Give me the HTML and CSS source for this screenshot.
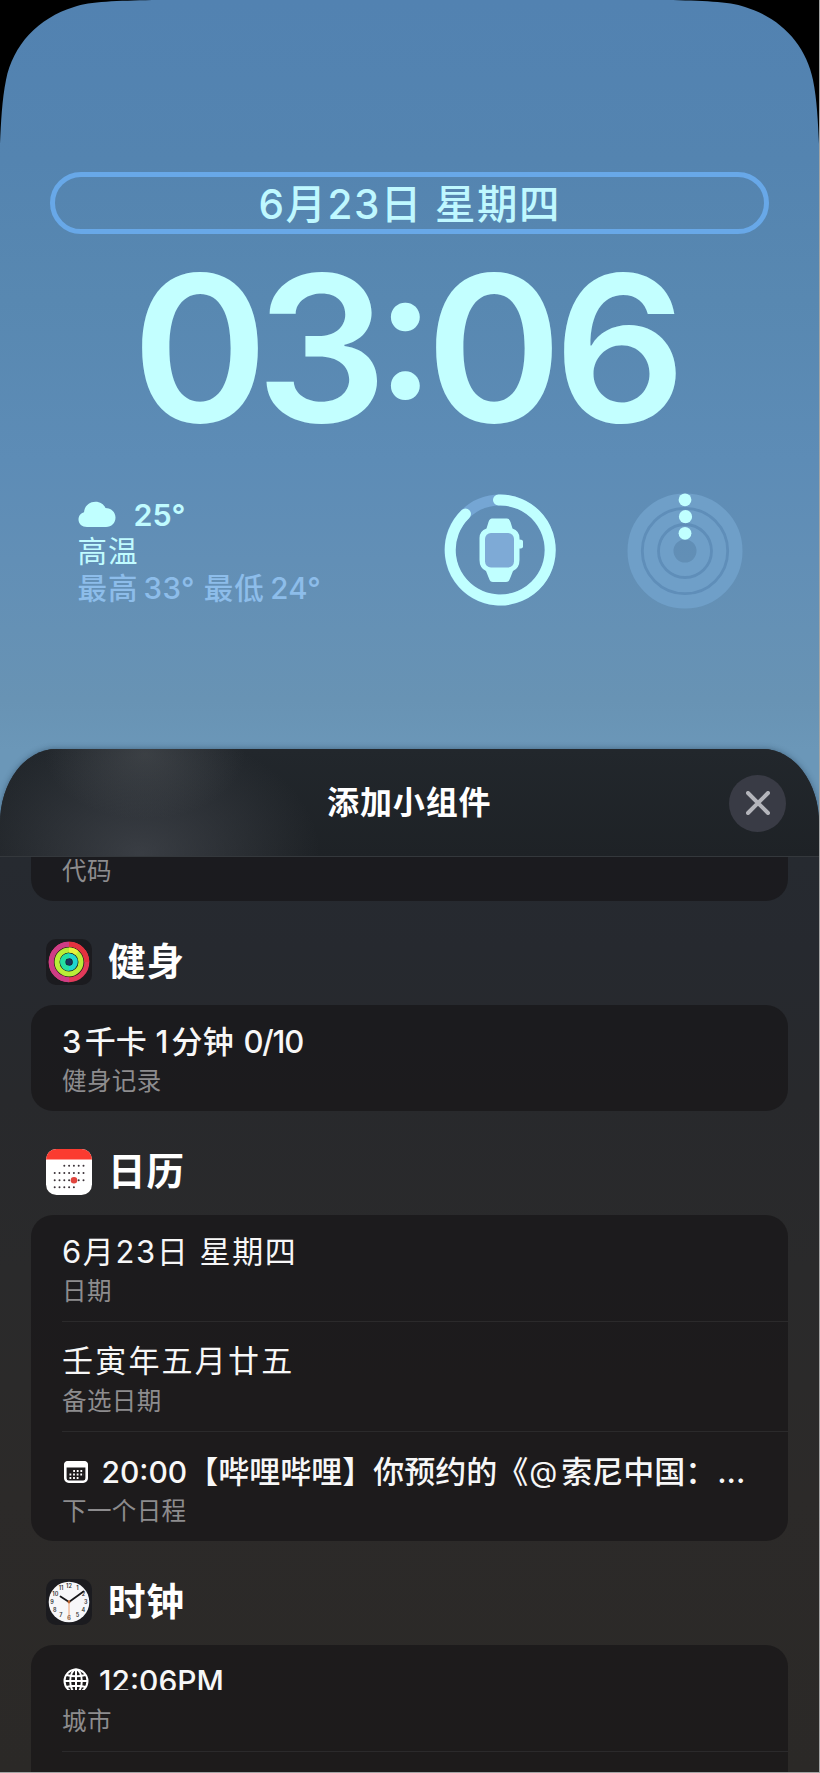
FILE: index.html
```html
<!DOCTYPE html>
<html lang="zh-CN">
<head>
<meta charset="utf-8">
<title>添加小组件</title>
<link rel="stylesheet" href="styles.css">
</head>
<body>
<div class="phone">
  <svg class="corner corner-left" viewBox="0 0 152 144"><path d="M0 0H152C118 1 90 1 74 7C38 18 13 45 6 80C2 100 1 122 0 144Z"/></svg>
  <svg class="corner corner-right" viewBox="0 0 152 144"><path d="M0 0H152C118 1 90 1 74 7C38 18 13 45 6 80C2 100 1 122 0 144Z"/></svg>

  <section class="lock">
    <div class="date-pill"><span class="date-text">6月23日 星期四</span></div>
    <div class="time"><span>0</span><span>3</span><span class="colon">:</span><span class="minute-tens">0</span><span>6</span></div>
    <div class="widgets">
      <div class="weather">
        <div class="weather-now">
          <svg class="cloud" viewBox="0 0 38 26"><path d="M9 26C4 26 .5 23 .5 18.500C.5 14.800 2.800 12 6 11.200C6.500 5 11.500 .8 17.500 .8C22 .8 25.800 3.200 27.500 7C33 7 37.500 11 37.500 16.500C37.500 22 33.500 26 28 26Z"/></svg>
          <span class="temp">25°</span>
        </div>
        <div class="weather-line">高温</div>
        <div class="weather-line dim">最高<span class="num high">33°</span> 最低<span class="num low">24°</span></div>
      </div>
      <svg class="battery" viewBox="0 0 112 112">
        <circle class="track" cx="56" cy="56" r="50"/>
        <path class="arc" d="M54.500 6A50 50 0 1 1 21.500 20"/>
        <path class="lit" d="M48 24.500H63Q65.500 24.500 66.500 28L68.500 34.500Q75.500 37 75.500 44V45.500Q79 45.500 79 47.500V52.500Q79 54.500 75.500 54.500V66Q75.500 74 69 77L66 84.500Q65 88 62 88H49Q46 88 45 84.500L42 77Q35.500 74 35.500 66V44Q35.500 37 42.500 34.500L44.500 28Q45.500 24.500 48 24.500Z"/>
        <rect class="screen" x="41" y="39" width="29" height="34.500" rx="6"/>
      </svg>
      <svg class="rings" viewBox="0 0 116 116">
        <circle class="band" cx="58" cy="58" r="50.500" stroke-width="14"/>
        <circle class="band" cx="58" cy="58" r="34.500" stroke-width="15"/>
        <circle class="band" cx="58" cy="58" r="18.500" stroke-width="14"/>
        <circle class="gap" cx="58" cy="58" r="42.700"/>
        <circle class="gap" cx="58" cy="58" r="26.500"/>
        <circle class="lit" cx="58" cy="6.800" r="6.400"/>
        <circle class="lit" cx="58.500" cy="23.700" r="6.600"/>
        <circle class="lit" cx="58" cy="40.300" r="6.400"/>
      </svg>
    </div>
  </section>

  <section class="sheet">
    <header class="sheet-head">
      <h1>添加小组件</h1>
      <button class="close" aria-label="关闭"><svg viewBox="0 0 24 24"><path d="M2 2L22 22M22 2L2 22"/></svg></button>
    </header>
    <div class="list">
      <div class="card card-cut"><div class="sub">代码</div></div>

      <div class="app-head">
        <svg class="app-icon" viewBox="0 0 46 46">
          <rect width="46" height="46" rx="10" fill="#1b1b1f"/>
          <g fill="none" stroke-width="5">
            <circle cx="23" cy="23" r="17.800" stroke="#e13a59"/>
            <path d="M23 40.800A17.800 17.800 0 0 1 23 5.200" stroke="#cf3d86"/>
            <path d="M23 5.200A17.800 17.800 0 0 1 40.800 23" stroke="#e3323f"/>
            <circle cx="23" cy="23" r="12" stroke="#b9ee38"/>
            <path d="M23 11A12 12 0 0 1 31 14" stroke="#e8f23d"/>
            <circle cx="23" cy="23" r="6.300" stroke="#20d6cf"/>
            <path d="M23 29.300A6.300 6.300 0 0 1 23 16.700" stroke="#25dfa2"/>
          </g>
          <circle cx="23" cy="23" r="3" fill="#17365f"/>
        </svg>
        <h2>健身</h2>
      </div>
      <div class="card">
        <div class="row"><div class="main medium fit-fitness"><span class="kcal">3</span>千卡 <span class="mins">1</span>分钟 <span class="hours">0/10</span></div><div class="sub">健身记录</div></div>
      </div>

      <div class="app-head">
        <svg class="app-icon" viewBox="0 0 46 46">
          <rect width="46" height="46" rx="10.500" fill="#fff"/>
          <path d="M0 10.500A10.500 10.500 0 0 1 10.500 0H35.500A10.500 10.500 0 0 1 46 10.500Z" fill="#fb3b30"/>
          <g stroke="#3b3238" stroke-width="2" stroke-linecap="round" stroke-dasharray="0 4.800">
            <path d="M18.300 16.800H38"/><path d="M8.700 24H38"/><path d="M8.700 31.200H38"/><path d="M8.700 38.300H29"/>
          </g>
          <circle cx="28" cy="31.200" r="3.300" fill="#e0453d"/>
        </svg>
        <h2>日历</h2>
      </div>
      <div class="card">
        <div class="row"><div class="main fit-date">6月23日 星期四</div><div class="sub">日期</div></div>
        <div class="row"><div class="main fit-lunar">壬寅年五月廿五</div><div class="sub">备选日期</div></div>
        <div class="row">
          <div class="main medium event">
            <svg class="mini cal" viewBox="0 0 26 24"><rect x="2.300" y="2.300" width="21.400" height="19.400" rx="3.500"/><path class="top" d="M1 7.500V5Q1 1 5 1H21Q25 1 25 5V7.500Z"/><path class="dots" d="M10.200 11H21M6.500 14.500H21M6.500 18H17.300"/></svg>
            <span class="event-time">20:00</span><span class="event-name">【哔哩哔哩】你预约的《</span><span class="event-at">@</span><span class="event-rest">索尼中国：</span><span class="event-more">...</span>
          </div>
          <div class="sub">下一个日程</div>
        </div>
      </div>

      <div class="app-head">
        <svg class="app-icon" viewBox="0 0 46 46">
          <rect width="46" height="46" rx="10" fill="#1b1b1f"/>
          <circle cx="23" cy="23" r="20.300" fill="#f7f7f9"/>
          <g class="digits"><text x="23" y="9">12</text><text x="31.500" y="11.300">1</text><text x="37.400" y="16.700">2</text><text x="39.800" y="24.600">3</text><text x="37.300" y="33">4</text><text x="31.500" y="38.300">5</text><text x="23" y="41.300">6</text><text x="14.800" y="38.300">7</text><text x="8.700" y="33">8</text><text x="6" y="24.600">9</text><text x="9.300" y="16.700">10</text><text x="15" y="11.300">11</text></g>
          <path d="M23 23L14.500 17.500M23 23L37.500 12.500" stroke="#17171a" stroke-width="1.800" stroke-linecap="round"/>
          <path d="M23 21V41" stroke="#f0a070" stroke-width="1"/>
          <circle cx="23" cy="23" r="1.400" fill="#b8622f"/>
        </svg>
        <h2>时钟</h2>
      </div>
      <div class="card card-last">
        <div class="row">
          <div class="main medium city">
            <svg class="mini globe" viewBox="0 0 26 26"><circle cx="13" cy="13" r="11.500"/><ellipse cx="13" cy="13" rx="5.800" ry="11.500"/><path d="M13 1.500V24.500M1.500 13H24.500M3.500 7Q13 9.500 22.500 7M3.500 19Q13 16.500 22.500 19"/></svg>
            <span class="city-time">12:06PM</span>
          </div>
          <div class="sub">城市</div>
        </div>
        <div class="row"></div>
      </div>
    </div>
  </section>
</div>
</body>
</html>
```
FILE: styles.css
```css
* { box-sizing: border-box; }

body {
  margin: 0;
  width: 820px;
  height: 1773px;
  overflow: hidden;
  background: #a5a5a5;
  font-family: Inter, "Noto Sans CJK SC", sans-serif;
}

.phone {
  position: relative;
  width: 818.5px;
  height: 1772px;
  overflow: hidden;
  background: linear-gradient(#5282b1 0, #5484b0 160px, #5888b1 300px, #5d8cb6 460px, #628fb6 560px, #6893b4 700px, #6b97b8 750px);
}

.corner {
  position: absolute;
  top: 0;
  width: 152px;
  height: 144px;
  fill: #000;
}
.corner-left { left: 0; }
.corner-right { right: 0; transform: scaleX(-1); }

/* lock screen */
.lock {
  height: 749px;
  padding: 172px 49.500px 0;
}
.date-pill {
  height: 62px;
  border: 5.500px solid #68a8e8;
  border-radius: 31px;
  display: flex;
  align-items: center;
  justify-content: center;
  color: #bff8ff;
}
.date-text {
  font-size: 40.500px;
  font-weight: 500;
  line-height: 50px;
  letter-spacing: 1.500px;
  padding: 3px 0 0 1px;
  white-space: nowrap;
}
.time {
  display: flex;
  align-items: baseline;
  justify-content: center;
  height: 250px;
  margin-top: -11px;
  padding-right: 11px;
  font-size: 203px;
  line-height: 250px;
  letter-spacing: -10px;
  font-weight: 600;
  color: #c3ffff;
}
.time span { transform: scaleX(1.02); }
.time .colon { font-size: 184px; letter-spacing: -8px; transform: translateY(-24px); }
.time .minute-tens { letter-spacing: -6px; }
.widgets {
  display: flex;
  align-items: flex-start;
  padding-left: 28px;
  margin-top: 21px;
}
.weather {
  width: 366px;
  padding-top: 2px;
  color: #c0fbff;
}
.weather-now {
  display: flex;
  align-items: center;
  gap: 18px;
  height: 37px;
}
.cloud { width: 38px; height: 26px; margin-bottom: 2px; fill: #c0ffff; }
.temp { font-size: 30.500px; font-weight: 600; line-height: 37px; }
.weather-line {
  font-size: 29.500px;
  line-height: 37px;
  letter-spacing: 1px;
  white-space: nowrap;
}
.weather-line.dim { color: #8dbdea; font-weight: 500; }
.high { margin-left: 5px; letter-spacing: .4px; }
.low { margin-left: 5.500px; letter-spacing: .4px; }
.battery { width: 112px; height: 112px; }
.battery .track { fill: none; stroke: #75a6d4; stroke-width: 11; }
.battery .arc { fill: none; stroke: #c0ffff; stroke-width: 11; stroke-linecap: round; }
.battery .screen { fill: #7eaad6; }
.lit { fill: #c0ffff; }
.rings { width: 116px; height: 116px; margin: -1px 0 0 71px; }
.rings .band { fill: none; stroke: #6f9fc8; }
.rings .gap { fill: none; stroke: #5f8eb9; stroke-width: 2.800; }

/* widget picker */
.sheet {
  height: 1023px;
  border-radius: 56px 56px 0 0 / 74px 74px 0 0;
  overflow: hidden;
  background: linear-gradient(#22272c 0, #262a30 110px, #26292f 200px, #28292c 350px, #2a2a2b 520px, #2c2a29 750px, #2b2927 1023px);
  box-shadow: 0 0 6px rgba(20, 40, 60, .45);
}
.sheet-head {
  height: 108px;
  padding: 1px 32.500px 0 327px;
  display: flex;
  align-items: center;
  justify-content: space-between;
  border-bottom: 1px solid #34383c;
  background:
    radial-gradient(ellipse 100px 65px at 145px 5px, rgba(90, 94, 98, .4), transparent),
    radial-gradient(ellipse 180px 125px at 140px 105px, rgba(80, 84, 92, .55), transparent),
    linear-gradient(#22272c, #1e2226);
}
h1, h2 { margin: 0; color: #fff; white-space: nowrap; }
h1 { font-size: 32px; line-height: 40px; letter-spacing: .9px; font-weight: 600; }
.close {
  width: 57px;
  height: 57px;
  border: 0;
  padding: 0;
  border-radius: 50%;
  background: #393b45;
  display: flex;
  align-items: center;
  justify-content: center;
}
.close svg { width: 24px; height: 24px; fill: none; stroke: #b4b5bb; stroke-width: 4; stroke-linecap: round; }

.list { padding: 0 30.500px 0 31px; }
.card {
  border-radius: 22px;
  padding-left: 31px;
  background: rgba(20, 19, 20, .6);
  overflow: hidden;
}
.card-cut { height: 44px; border-radius: 0 0 22px 22px; }
.row { height: 110px; padding-top: 20px; border-top: 1px solid #2b2a2b; }
.row:first-child { height: 106px; padding-top: 18px; border-top: 0; }
.main {
  height: 40px;
  font-size: 31px;
  line-height: 38px;
  color: #f7f7f7;
  white-space: nowrap;
}
.medium { font-weight: 500; }
.fit-fitness { letter-spacing: .2px; }
.kcal { margin-right: 3px; }
.mins { margin-right: 3px; }
.hours { letter-spacing: -1.200px; margin-left: 1px; }
.fit-date { letter-spacing: 1.600px; }
.fit-lunar { letter-spacing: 2.200px; }
.sub {
  font-size: 24.500px;
  line-height: 30px;
  color: #8d8c8e;
  letter-spacing: .4px;
  margin-top: 4px;
}
.row:first-child .sub { margin-top: 3px; }
.card-cut .sub { margin: -1px 0 0; }
.app-head {
  display: flex;
  align-items: center;
  gap: 16px;
  height: 104px;
  padding: 18px 0 0 15px;
}
.app-icon { width: 46px; height: 46px; }
h2 { font-size: 37.500px; line-height: 50px; font-weight: 700; letter-spacing: 1px; }
.digits { font-size: 5.500px; font-weight: 600; text-anchor: middle; fill: #333; }
.event, .city { display: flex; align-items: center; }
.mini { width: 26px; height: 24px; flex: none; fill: none; stroke: #fff; }
.cal { stroke-width: 2.600; margin: 0 12.500px 0 1px; }
.cal .top { fill: #fff; stroke: none; }
.cal .dots { stroke-width: 1.800; stroke-dasharray: 1.800 1.800; }
.event-time { font-size: 30px; }
.event-at { font-size: 29px; margin: 0 4px 0 1px; font-weight: 400; }
.event-rest { margin-right: 1px; }
.globe { height: 26px; stroke-width: 2; margin: 5px 10px 0 1px; }
.city { height: 27px; overflow: hidden; align-items: flex-start; }
.city-time { font-size: 30px; line-height: 37px; }
.card-last { border-radius: 22px 22px 0 0; height: 140px; }
.card-last .row:first-child .sub { margin-top: 15.500px; }
```
